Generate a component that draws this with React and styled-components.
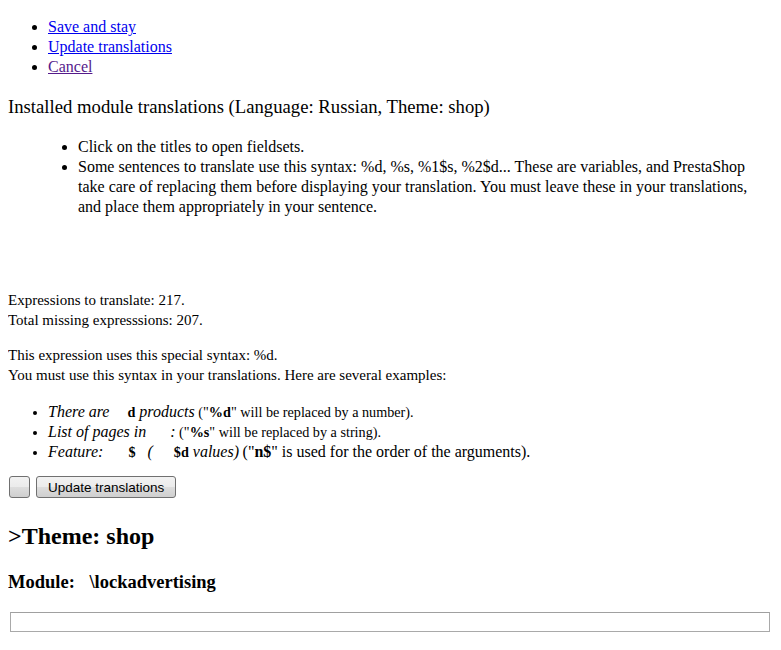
import React from 'react';
import styled, { createGlobalStyle } from 'styled-components';

const GlobalStyle = createGlobalStyle`
  body {
    margin: 8px;
    background: #fff;
    color: #000;
    font-family: "Liberation Serif", "Times New Roman", serif;
    font-size: 16px;
    line-height: 20px;
  }
`;

const ActionList = styled.ul`
  margin: 9px 0 0;
  padding-left: 40px;
  list-style: disc;
`;

const ActionLink = styled.a`
  color: ${props => (props.visited ? '#551a8b' : '#0000ee')};
  text-decoration: underline;
  cursor: pointer;
`;

const PageTitle = styled.div`
  margin-top: 19px;
  font-size: 18.7px;
  line-height: 22px;
`;

const HelpList = styled.ul`
  margin: 19px 0 0;
  padding-left: 70px;
  list-style: disc;
`;

const Counts = styled.div`
  margin-top: 73px;
  font-size: 15px;
`;

const Notice = styled.div`
  margin-top: 15px;
  font-size: 15px;
`;

const ExampleList = styled.ul`
  margin: 17px 0 0;
  padding-left: 40px;
  list-style: disc;
  font-size: 14.2px;

  i {
    font-size: 16px;
  }
`;

const Note = styled.span`
  font-size: 16px;
`;

const Gap = styled.span`
  display: inline-block;
  width: ${props => props.w}px;
`;

const Buttons = styled.div`
  display: flex;
  gap: 6px;
  margin-top: 14px;
  margin-left: 1px;
`;

const Button = styled.button`
  height: 22px;
  width: ${props => (props.w ? `${props.w}px` : 'auto')};
  padding: ${props => (props.w ? '0' : '0 11px')};
  border: 1px solid #707070;
  border-radius: 3px;
  background: linear-gradient(#f2f2f2 0%, #ebebeb 50%, #dddddd 51%, #cfcfcf 100%);
  font-family: "Liberation Sans", Arial, sans-serif;
  font-size: 13.5px;
  color: #000;
`;

const ThemeTitle = styled.h2`
  margin: 24px 0 0;
  font-size: 24px;
  line-height: 28px;
  font-weight: bold;
`;

const ModuleTitle = styled.h3`
  margin: 21px 0 0;
  font-size: 18.5px;
  line-height: 22px;
  font-weight: bold;
`;

const Fieldset = styled.div`
  margin: 19px 3px 0 2px;
  height: 18px;
  border: 1px solid #a9a9a9;
  border-top-color: #a0a0a0;
`;

export default function App() {
  return (
    <>
      <GlobalStyle />
      <ActionList>
        <li><ActionLink>Save and stay</ActionLink></li>
        <li><ActionLink>Update translations</ActionLink></li>
        <li><ActionLink visited>Cancel</ActionLink></li>
      </ActionList>

      <PageTitle>Installed module translations (Language: Russian, Theme: shop)</PageTitle>

      <HelpList>
        <li>Click on the titles to open fieldsets.</li>
        <li>
          Some sentences to translate use this syntax: %d, %s, %1$s, %2$d... These are variables, and PrestaShop
          take care of replacing them before displaying your translation. You must leave these in your translations,
          and place them appropriately in your sentence.
        </li>
      </HelpList>

      <Counts>
        Expressions to translate: 217.<br />
        Total missing expresssions: 207.
      </Counts>

      <Notice>
        This expression uses this special syntax: %d.<br />
        You must use this syntax in your translations. Here are several examples:
      </Notice>

      <ExampleList>
        <li>
          <i>There are <Gap w={14} /></i><b>d</b><i> products</i> ("<b>%d</b>" will be replaced by a number).
        </li>
        <li>
          <i>List of pages in <Gap w={20} />:</i> ("<b>%s</b>" will be replaced by a string).
        </li>
        <li>
          <i>Feature: <Gap w={21} /></i><b>$</b><i> <Gap w={8} />( <Gap w={17} /></i><b>$d</b><i> values)</i>{' '}
          <Note>("<b>n$</b>" is used for the order of the arguments).</Note>
        </li>
      </ExampleList>

      <Buttons>
        <Button w={21} />
        <Button>Update translations</Button>
      </Buttons>

      <ThemeTitle>&gt;Theme: shop</ThemeTitle>
      <ModuleTitle>Module: <Gap w={10} />\lockadvertising</ModuleTitle>

      <Fieldset />
    </>
  );
}
